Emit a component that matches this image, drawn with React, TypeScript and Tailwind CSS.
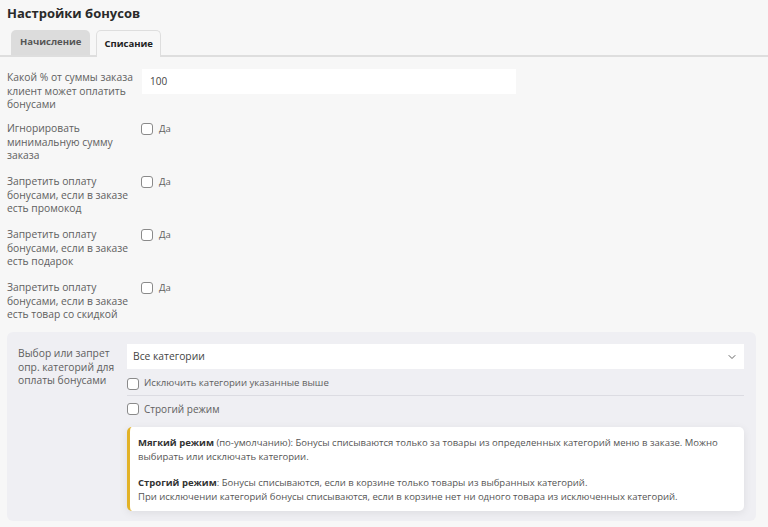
import { ChevronDown } from "lucide-react";

const rows = [
  "Игнорировать минимальную сумму заказа",
  "Запретить оплату бонусами, если в заказе есть промокод",
  "Запретить оплату бонусами, если в заказе есть подарок",
  "Запретить оплату бонусами, если в заказе есть товар со скидкой",
];

function Box() {
  return <span className="w-[12px] h-[12px] shrink-0 rounded-[3px] border border-[#8a8a8a] bg-white" />;
}

export default function App() {
  return (
    <div className="w-[768px] h-[527px] overflow-hidden bg-[#f7f7f7] font-['Open_Sans',sans-serif] text-[#606060]">
      <h1 className="pl-[7px] pt-[4px] text-[13px] font-bold text-[#2a2a2a] leading-[18px]">Настройки бонусов</h1>

      {/* Tabs */}
      <div className="mt-[8px] flex items-end gap-[6px] pl-[11px] border-b-2 border-[#dedede]">
        <div className="h-[25px] px-[9px] flex items-center rounded-t-[5px] bg-[#dcdcdc] text-[9.5px] font-bold text-[#555]">
          Начисление
        </div>
        <div className="h-[27px] px-[7px] flex items-center rounded-t-[5px] border border-b-0 border-[#dedede] bg-[#f7f7f7] text-[9.5px] font-bold text-[#222] -mb-[2px]">
          Списание
        </div>
      </div>

      <div className="pl-[7px] pt-[12px]">
        <div className="flex h-[53px]">
          <div className="w-[135px] pr-[4px] pt-[2px] text-[10.3px] leading-[13.5px]">Какой % от суммы заказа клиент может оплатить бонусами</div>
          <div className="w-[374px] h-[25px] bg-white px-[8px] flex items-center text-[10px] text-[#444]">100</div>
        </div>
        {rows.map((r) => (
          <div key={r} className="flex h-[53px]">
            <div className="w-[134px] pr-[12px] text-[10.3px] leading-[13.5px]">{r}</div>
            <label className="flex items-center gap-[6px] h-[12px] mt-[1px] text-[9.5px]">
              <Box />
              Да
            </label>
          </div>
        ))}
      </div>

      {/* Categories panel */}
      <div className="ml-[7px] mr-[12px] mt-[-2px] rounded-[6px] bg-[#efeff3] pl-[11px] pr-[12px] pt-[12px] pb-[10px] flex">
        <div className="w-[109px] pr-[12px] pt-[3px] text-[10.3px] leading-[13.5px]">Выбор или запрет опр. категорий для оплаты бонусами</div>
        <div className="flex-1">
          <div className="h-[25px] bg-white flex items-center justify-between px-[6px] text-[10.3px] text-[#444]">
            Все категории
            <ChevronDown className="w-[12px] h-[12px] text-[#666]" strokeWidth={2} />
          </div>
          <label className="flex items-center gap-[5px] h-[27px] pt-[3px] text-[9.6px] border-b border-[#dcdce2]">
            <Box />
            Исключить категории указанные выше
          </label>
          <label className="flex items-center gap-[5px] h-[26px] text-[10px]">
            <Box />
            Строгий режим
          </label>
          <div className="mt-[5px] rounded-[5px] bg-white border-l-[3px] border-[#e2b227] shadow-[0_2px_8px_rgba(0,0,0,0.08)] pl-[8px] pr-[10px] pt-[9px] pb-[8px] text-[9.5px] leading-[13.5px] text-[#555]">
            <p>
              <b className="text-[#333]">Мягкий режим</b> (по-умолчанию): Бонусы списываются только за товары из определенных категорий меню в заказе. Можно выбирать или исключать категории.
            </p>
            <p className="mt-[13px]">
              <b className="text-[#333]">Строгий режим</b>: Бонусы списываются, если в корзине только товары из выбранных категорий.
              <br />
              При исключении категорий бонусы списываются, если в корзине нет ни одного товара из исключенных категорий.
            </p>
          </div>
        </div>
      </div>
    </div>
  );
}
